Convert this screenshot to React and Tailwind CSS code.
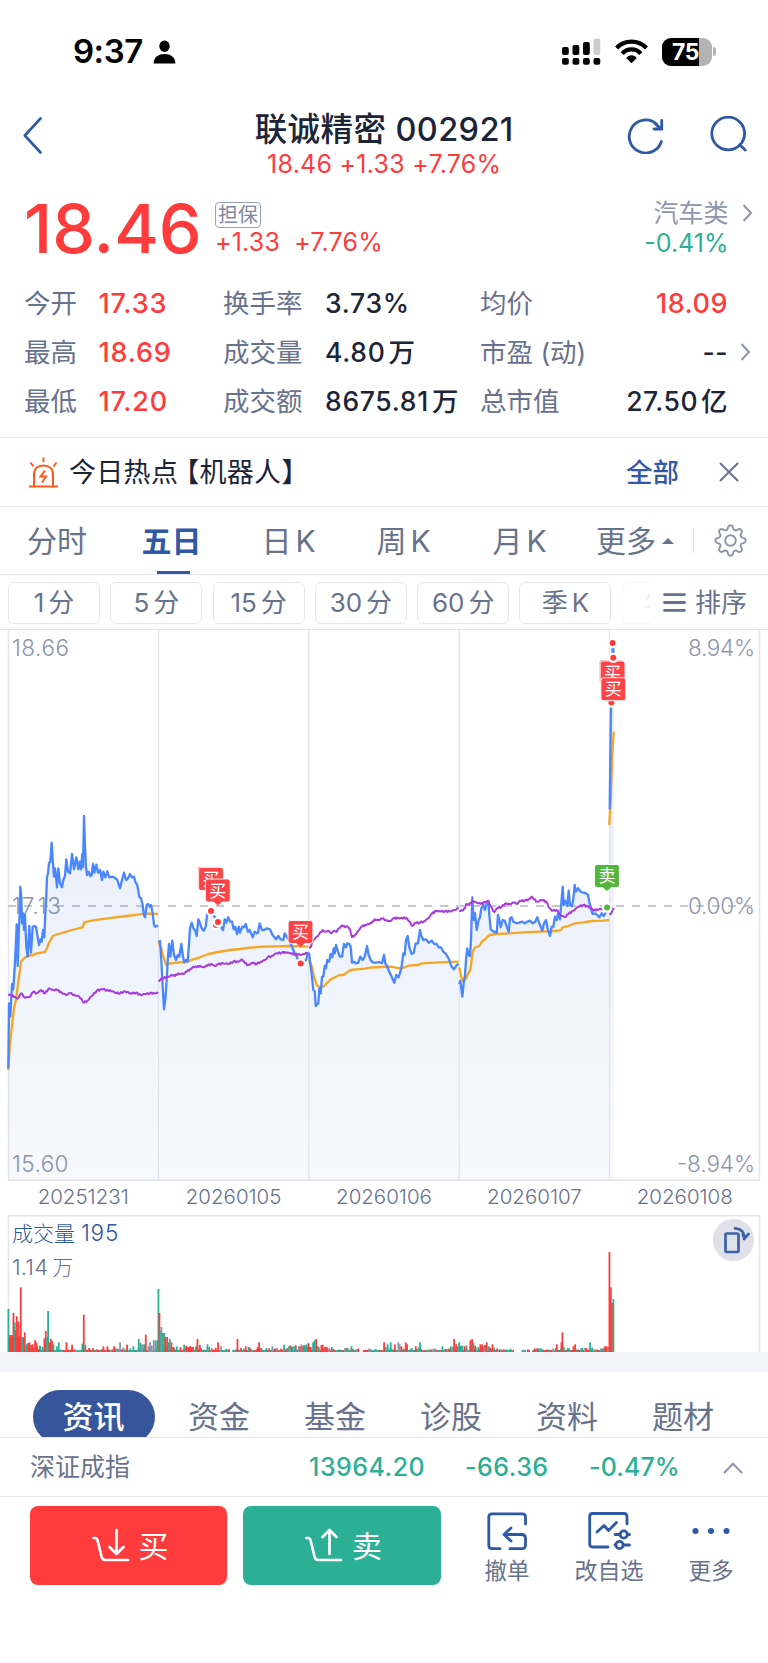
import { Fragment } from 'react'

const RED = '#ff3b3b'
const GREEN = '#52b53c'
const BLUE = '#4a86ff'
const ORANGE = '#f5a623'
const PURPLE = '#a93bdc'

// every session is sampled on a fine grid: three units to one pixel
const SESSIONS = [
  {
    x: 0,
    y: 150,
    price:
      '25,865 27,670 31,710 36,612 40,628 44,560 47,500 50,433 53,558 57,440 59,400 61,320 64,350 66,430 69,400 72,450 75,405 79,500 83,530 88,438 93,518 98,440 103,438 108,440 112,465 117,495 121,478 125,485 129,450 133,472 136,400 139,350 141,290 144,280 147,250 151,245 155,188 158,240 162,290 165,265 168,290 171,322 175,265 180,310 186,322 190,300 195,288 199,238 204,275 210,280 216,222 222,268 229,232 235,268 239,245 243,268 247,222 249,262 252,108 255,200 258,262 261,285 266,275 271,288 275,285 279,252 283,278 289,254 294,278 300,270 306,300 310,275 316,292 322,274 328,292 336,290 343,292 352,300 360,325 366,300 372,278 378,300 384,295 390,282 396,292 402,290 407,308 412,315 418,350 423,355 428,375 431,402 435,412 440,375 444,372 449,380 453,375 458,400 462,435 466,440 470,438 474,436',
    avg: '25,870 30,790 37,730 42,685 48,660 55,605 60,570 63,545 72,535 82,528 100,525 110,520 135,516 141,505 146,490 152,480 158,468 175,462 190,458 215,450 248,442 253,427 275,422 300,418 340,413 380,408 420,403 440,401 474,402',
    index:
      '25,642 35,648 45,650 53,656 64,640 72,652 88,652 100,635 110,640 122,630 135,640 148,625 160,630 172,630 185,638 198,645 210,640 222,644 238,650 252,668 262,662 275,648 290,632 305,628 312,626 318,632 330,630 345,638 360,640 375,634 392,640 408,638 422,645 435,642 450,640 474,640',
  },
  {
    x: 0,
    y: 150,
    price:
      '475,485 480,483 484,540 488,620 492,688 496,660 500,600 503,540 507,492 511,530 517,482 522,525 528,540 533,525 538,530 544,492 549,530 553,548 558,540 563,545 567,490 570,445 575,428 580,445 585,450 590,468 595,418 600,430 605,445 611,452 617,440 622,400 630,395 640,405 650,420 655,430 662,440 669,450 674,418 679,428 685,412 690,425 696,425 701,448 706,440 711,462 716,440 720,458 727,440 732,442 737,432 744,455 749,450 758,472 764,455 770,460 774,458 779,430 786,450 793,450 800,445 810,448 816,462 822,470 828,478 835,468 842,478 850,480 854,460 860,470 868,480 876,500 884,520 890,530 896,542 902,550 910,545 918,540 925,518',
    avg: '475,485 484,505 490,530 498,555 510,550 540,547 560,545 580,538 600,532 625,522 655,516 690,510 720,507 750,503 790,500 830,499 870,498 925,500',
    index:
      '475,603 490,595 505,590 515,585 525,588 535,580 550,582 560,575 570,568 580,560 590,562 600,557 610,562 622,557 635,552 645,558 655,553 670,550 685,552 700,545 715,545 726,538 735,550 745,555 757,548 770,552 782,545 795,540 803,532 815,528 830,520 845,518 855,516 870,520 885,523 900,524 912,522 925,518',
  },
  {
    x: 290,
    y: 230,
    price:
      '57,278 62,320 66,350 70,390 74,392 77,438 82,432 85,430 88,385 92,400 96,350 100,350 104,318 108,325 112,300 117,305 122,282 127,292 131,265 134,280 138,255 143,272 149,290 156,290 162,252 168,262 172,250 178,252 182,260 186,308 192,305 198,310 205,308 211,290 218,300 224,290 231,258 236,285 243,302 250,308 260,308 268,306 276,310 282,285 286,310 292,320 298,335 305,350 313,368 319,345 326,352 334,325 340,280 344,285 348,240 353,228 358,262 365,282 371,278 377,250 384,250 390,210 394,228 400,240 408,238 416,248 425,242 433,252 440,252 446,262 453,262 460,275 468,282 477,298 484,318 492,328 500,315 506,312',
    avg: '57,300 66,320 72,350 80,375 90,383 100,380 110,370 122,358 135,352 148,345 160,345 170,338 182,330 200,328 225,326 240,323 275,321 300,320 330,325 345,322 355,317 385,315 395,310 430,308 506,305',
    index:
      '57,263 62,262 70,240 80,230 88,222 98,210 106,215 114,212 122,220 132,212 140,215 147,205 156,196 166,202 174,200 180,208 186,232 195,225 205,212 215,200 225,195 235,192 244,190 254,178 266,180 276,176 288,180 300,184 312,175 325,174 350,174 358,185 367,198 376,188 390,188 402,184 415,175 425,162 438,152 450,154 465,154 480,154 495,150 506,144',
  },
  {
    x: 290,
    y: 230,
    price:
      '508,372 511,362 514,385 517,410 521,370 525,345 528,300 532,265 536,285 540,288 543,240 547,112 551,180 555,160 560,210 566,180 570,172 574,145 580,135 585,150 590,128 595,125 598,165 602,208 607,212 612,215 620,218 624,165 628,180 632,202 638,180 644,182 650,200 656,215 660,175 665,172 670,185 680,190 688,188 696,185 704,190 712,185 720,182 728,190 736,185 742,172 748,190 757,212 762,190 768,180 774,210 780,228 785,200 790,200 795,170 800,180 804,160 810,178 814,130 818,80 821,135 826,122 832,138 836,92 840,135 846,138 850,118 854,75 858,95 864,85 872,95 880,98 888,100 894,105 898,125 903,148 908,162 915,160 922,165 928,172 935,160 941,168 946,160 950,152 954,144 958,144',
    avg: '508,322 513,348 520,365 528,355 536,338 541,330 545,300 548,275 555,262 568,258 576,245 588,235 598,225 620,222 660,220 700,217 750,215 800,213 813,210 818,202 835,198 855,190 880,187 905,183 940,182 958,180',
    index:
      '508,152 518,152 525,145 528,132 538,135 547,122 560,128 572,132 585,126 595,122 602,140 613,156 620,145 635,140 648,130 660,132 672,128 680,132 690,122 705,122 716,118 725,110 732,118 742,125 755,120 768,124 775,138 785,152 800,150 812,165 825,172 835,162 850,152 865,140 880,135 895,140 905,145 912,152 922,148 935,147 950,150',
  },
  {
    x: 540,
    y: -10,
    price: '209,568 213,258 216,150 218,69 221,100',
    avg: '208,615 213,520 217,400 221,338 224,338',
    index: '208,882 213,882 218,868 223,865',
  },
]

// [x, top, colour] on the same grid, base line at 637
const VOLUME_PEAKS = [
  [25, 508, 'g'], [30, 586, 'r'], [36, 586, 'r'], [40, 520, 'r'], [44, 548, 'g'], [47, 572, 'r'], [50, 530, 'r'], [55, 545, 'r'],
  [58, 590, 'r'], [62, 443, 'r'], [66, 592, 'g'], [70, 614, 'g'], [74, 578, 'r'], [79, 614, 'g'], [84, 610, 'r'], [88, 608, 'r'],
  [93, 616, 'r'], [98, 614, 'r'], [105, 602, 'r'], [109, 608, 'r'], [120, 620, 'g'], [133, 596, 'r'], [137, 574, 'r'], [141, 592, 'g'],
  [144, 514, 'g'], [148, 608, 'r'], [152, 598, 'r'], [156, 604, 'r'], [160, 614, 'g'], [170, 620, 'g'], [176, 608, 'g'], [199, 608, 'r'],
  [216, 615, 'r'], [247, 612, 'g'], [251, 525, 'r'], [256, 615, 'g'], [310, 620, 'r'], [322, 620, 'r'], [342, 620, 'r'], [360, 608, 'n'],
  [381, 615, 'r'], [400, 620, 'g'], [416, 598, 'g'], [421, 610, 'g'], [426, 614, 'n'], [432, 614, 'g'], [437, 585, 'r'], [445, 620, 'n'],
  [450, 608, 'n'], [455, 618, 'n'], [461, 602, 'n'], [466, 602, 'n'], [471, 602, 'g'], [475, 448, 'g'], [478, 520, 'r'], [481, 574, 'g'],
  [484, 562, 'n'], [488, 580, 'g'], [492, 580, 'g'], [496, 592, 'r'], [501, 592, 'r'], [505, 608, 'g'], [509, 598, 'g'], [514, 608, 'r'],
  [520, 622, 'r'], [530, 620, 'g'], [541, 622, 'r'], [552, 615, 'g'], [560, 622, 'r'], [565, 622, 'r'], [570, 620, 'r'], [575, 622, 'r'],
  [588, 620, 'g'], [592, 598, 'r'], [622, 614, 'g'], [627, 622, 'g'], [654, 608, 'r'], [663, 620, 'n'], [712, 598, 'r'], [737, 620, 'r'],
  [746, 622, 'g'], [773, 622, 'r'], [777, 608, 'r'], [817, 620, 'n'], [852, 615, 'g'], [870, 626, 'n'], [878, 620, 'g'], [886, 620, 'g'],
  [896, 620, 'n'], [904, 614, 'n'], [912, 616, 'g'], [919, 614, 'g'], [925, 610, 'r'], [932, 622, 'r'], [939, 608, 'g'], [943, 602, 'g'],
  [948, 598, 'r'], [956, 624, 'g'], [964, 616, 'r'], [968, 615, 'r'], [980, 622, 'r'], [995, 622, 'g'], [1040, 626, 'g'], [1054, 620, 'g'],
  [1152, 608, 'r'], [1157, 622, 'g'], [1163, 614, 'g'], [1172, 608, 'g'], [1184, 614, 'r'], [1195, 608, 'n'], [1199, 614, 'n'], [1204, 620, 'r'],
  [1217, 608, 'r'], [1221, 614, 'r'], [1247, 620, 'r'], [1257, 622, 'g'], [1260, 608, 'g'], [1327, 620, 'g'], [1352, 620, 'g'], [1357, 624, 'n'],
  [1362, 598, 'r'], [1368, 614, 'r'], [1373, 620, 'g'], [1377, 608, 'g'], [1381, 618, 'g'], [1386, 618, 'g'], [1394, 620, 'r'], [1400, 624, 'n'],
  [1411, 602, 'r'], [1416, 598, 'r'], [1420, 610, 'g'], [1425, 618, 'r'], [1441, 614, 'r'], [1446, 614, 'r'], [1455, 624, 'n'], [1460, 608, 'r'],
  [1466, 620, 'g'], [1471, 624, 'r'], [1477, 614, 'r'], [1482, 624, 'g'], [1604, 626, 'r'], [1616, 626, 'g'], [1670, 614, 'r'], [1684, 608, 'r'],
  [1687, 578, 'r'], [1691, 622, 'g'], [1707, 626, 'g'], [1720, 620, 'r'], [1725, 614, 'r'], [1770, 608, 'g'], [1776, 624, 'g'], [1815, 620, 'r'],
  [1820, 620, 'r'], [1824, 622, 'n'], [1828, 337, 'r'], [1832, 443, 'r'], [1836, 490, 'r'], [1840, 478, 'g'],
]
const VOLUME_COLORS = { r: '#ff3b3b', g: '#2bb096', n: '#8d93a3' }
const VOLUME_GAPS = [[688, 698], [1078, 1088], [1542, 1564], [1576, 1580], [1590, 1598]]

const toPixels = (text, x0, y0) =>
  text.split(' ').map((pair) => {
    const [x, y] = pair.split(',').map(Number)
    return [+(x0 + x / 3).toFixed(1), +(y0 + y / 3).toFixed(1)]
  })

const toLine = (points) => points.map((p) => p.join(',')).join(' ')

// minute ticks of the index, a small step up and down between the samples
const withTicks = (points) =>
  points.flatMap(([x, y], i) => {
    const next = points[i + 1]
    if (!next) return [[x, y]]
    const ticks = Math.max(1, Math.round((next[0] - x) / 1.2))
    return Array.from({ length: ticks }, (_, t) => [
      +(x + ((next[0] - x) * t) / ticks).toFixed(1),
      +(y + ((next[1] - y) * t) / ticks + (t ? Math.sin(i * 2.1 + t * 2.6) * 0.8 : 0)).toFixed(1),
    ])
  })

const quietBars = () => {
  const bars = []
  let seed = 11
  for (let x = 27; x < 1842; x += 4) {
    seed = (seed * 1103515245 + 12345) % 2147483648
    const r = seed / 2147483648
    if (VOLUME_GAPS.some(([a, b]) => x >= a && x <= b)) continue
    const busy = x < 130 || (x > 480 && x < 600) || (x > 860 && x < 980) || (x > 1350 && x < 1480)
    const tall = x < 75 ? 44 : busy ? 15 : 9
    const kind = x < 75 ? 'r' : r < 0.45 ? 'r' : r < 0.9 ? 'g' : 'n'
    bars.push([x, 637 - Math.max(6, tall * (x < 75 ? 1 : (r * 7) % 1.4)), kind])
  }
  return bars
}

const gearPath = () =>
  Array.from({ length: 97 }, (_, i) => {
    const angle = (i / 96) * Math.PI * 2
    const r = 13.1 + 2.1 * Math.tanh(1.7 * Math.cos(8 * angle))
    return `${i ? 'L' : 'M'}${(16.5 + r * Math.cos(angle)).toFixed(2)} ${(16.5 + r * Math.sin(angle)).toFixed(2)}`
  }).join('') + 'z'

const Chevron = ({ className }) => (
  <svg className={className} viewBox="0 0 10 18" fill="none" stroke="#8f95aa" strokeWidth="2">
    <path d="M1 1l7.5 8L1 17" />
  </svg>
)

const StatusBar = () => (
  <div className="h-[102px] pt-[1px] pl-[73px] pr-[52.5px] flex items-center justify-between">
    <div className="flex items-center">
      <span className="text-[33px] font-semibold tracking-[-0.5px] text-black">9:37</span>
      <svg className="ml-[10px] w-[23px] h-[24px]" viewBox="0 0 24 24">
        <ellipse cx="12" cy="6" rx="5.4" ry="6" fill="#000" />
        <path d="M0.6 24C0.6 17.5 5.5 14 12 14s11.4 3.5 11.4 10z" fill="#000" />
      </svg>
    </div>
    <div className="flex items-center">
      <svg className="w-[39px] h-[27px]" viewBox="0 0 39 27">
        {[0, 10.5, 21, 31.5].map((x) => (
          <rect key={x} x={x} y="20" width="6.8" height="6.8" rx="2" fill="#000" />
        ))}
        <rect x="0" y="9" width="6.8" height="8" rx="2" fill="#000" />
        <rect x="10.5" y="7" width="6.8" height="10" rx="2" fill="#000" />
        <rect x="21" y="4" width="6.8" height="13" rx="2" fill="#000" />
        <rect x="31.5" y="0.5" width="6.8" height="16.5" rx="2" fill="#ccc" />
      </svg>
      <svg className="ml-[14px] w-[33px] h-[25px]" viewBox="0 0 33 25" fill="none" stroke="#000" strokeWidth="4.2">
        <path d="M1.6 9C9.5 0.4 23.5 0.4 31.4 9" />
        <path d="M7.2 14.6C12 9 21 9 25.8 14.6" />
        <path d="M11.4 19.2C13.5 15.4 19.5 15.4 21.6 19.2L16.5 24.3z" fill="#000" stroke="none" />
      </svg>
      <div className="ml-[14px] w-[50px] h-[28px] rounded-[9px] overflow-hidden bg-[#b3b3b3] relative">
        <div className="absolute left-0 top-0 w-[37px] h-full bg-black"></div>
        <div className="absolute left-[10.5px] top-0 leading-[28px] text-[23px] tracking-[-0.5px] font-bold text-white">75</div>
      </div>
      <div className="ml-[1px] w-[3px] h-[9px] rounded-r-full bg-[#b3b3b3]"></div>
    </div>
  </div>
)

const NavBar = () => (
  <div className="h-[84px] pl-[23px] pr-[20.5px] flex justify-between">
    <svg className="mt-[15px] w-[19px] h-[37px]" viewBox="0 0 19 37" fill="none" stroke="#2f58a6" strokeWidth="2.6">
      <path d="M17.5 1.5L1.8 18.5L17.5 35.5" strokeLinecap="round" strokeLinejoin="round" />
    </svg>
    <div className="ml-[99px] pt-[9px] text-center">
      <div className="text-[32.5px] leading-[37px] tracking-[0.4px] font-medium text-[#1c2438] whitespace-nowrap">联诚精密 002921</div>
      <div className="text-[25px] leading-[32px] tracking-[0.25px] text-[#ff3b3b] whitespace-nowrap">18.46 +1.33 +7.76%</div>
    </div>
    <div className="mt-[14px] flex gap-[46px]">
      <svg className="w-[37px] h-[38px]" viewBox="0 0 37 38" fill="none" stroke="#2f58a6" strokeWidth="2.8">
        <path d="M29.5 8A16.5 16.5 0 1 0 34.4 25.5" strokeLinecap="round" />
        <path d="M34.7 4.5V13H27M28 7.5L33 12" strokeLinecap="round" />
      </svg>
      <svg className="w-[37px] h-[38px]" viewBox="0 0 37 38" fill="none" stroke="#2f58a6" strokeWidth="2.8">
        <circle cx="18.2" cy="17.5" r="16.4" />
        <path d="M29.8 28.8L35.2 34" strokeLinecap="round" />
      </svg>
    </div>
  </div>
)

const PriceHeader = () => (
  <div className="h-[92px] pl-[24px] pr-[15.5px] flex">
    <div className="w-[191px] text-[68px] leading-[85px] font-medium text-[#ff3b3b]">18.46</div>
    <div className="pt-[16px]">
      <div className="w-[46px] h-[26px] rounded-[4px] border-[1.5px] border-[#9a9fb8] text-[20px] leading-[24px] text-center text-[#8087a3]">担保</div>
      <div className="text-[25px] leading-[29px] tracking-[0.2px] text-[#ff3b3b] flex gap-[14px]">
        <span>+1.33</span>
        <span>+7.76%</span>
      </div>
    </div>
    <div className="ml-auto pt-[12px] flex">
      <div className="text-right text-[25px] leading-[30px]">
        <div className="text-[#8f95aa]">汽车类</div>
        <div className="text-[#2bb096]">-0.41%</div>
      </div>
      <Chevron className="ml-[13px] mt-[6px] w-[11px] h-[18px]" />
    </div>
  </div>
)

const STATS = [
  ['今开', '17.33', '', '换手率', '3.73%', '', '均价', '18.09', ''],
  ['最高', '18.69', '', '成交量', '4.80', '万', '市盈 (动)', '--', ''],
  ['最低', '17.20', '', '成交额', '8675.81', '万', '总市值', '27.50', '亿'],
]

const Stats = () => (
  <div className="h-[160px] pt-[0.5px] pl-[24px] text-[26.5px] leading-[49px] border-b-[1.5px] border-[#e6e8ee]">
    {STATS.map((row) => (
      <div key={row[0]} className="h-[49px] flex whitespace-nowrap">
        <div className="w-[74.5px] text-[#69728c]">{row[0]}</div>
        <div className="w-[124.5px] text-[27px] tracking-[0.8px] font-medium text-[#ff3b3b]">{row[1]}</div>
        <div className="w-[102px] text-[#69728c]">{row[3]}</div>
        <div className="w-[155px] tracking-[0.7px] font-medium text-[#1c2438]">
          {row[4]}
          <span className="ml-[3px]">{row[5]}</span>
        </div>
        <div className="text-[#69728c]">{row[6]}</div>
        <div className={`ml-auto tracking-[0.5px] font-medium ${row[6] === '均价' ? 'text-[27px] text-[#ff3b3b]' : 'text-[#1c2438]'}`}>
          {row[7]}
          {row[8] && <span className="ml-[3px]">{row[8]}</span>}
        </div>
        <div className="w-[40px] pl-[12px]">{row[7] === '--' && <Chevron className="mt-[15px] w-[11px] h-[18px]" />}</div>
      </div>
    ))}
  </div>
)

const HotTopic = () => (
  <div className="h-[69px] pl-[28px] pr-[29px] flex items-center border-b-[1.5px] border-[#e6e8ee]">
    <svg className="w-[31px] h-[31px]" viewBox="0 0 31 31" fill="none" stroke="#fb5a1c" strokeWidth="2">
      <path d="M1 29.5H30M6 29V17.5C6 11.5 10 8.5 15.5 8.5S25 11.5 25 17.5V29" />
      <path d="M15.5 0.5V5M2.5 5.5L5.5 9.5M28.5 5.5L25.5 9.5" />
      <path d="M17 13.5L12.5 19.5H18L14 25.5" />
    </svg>
    <div className="ml-[10px] pt-[2px] text-[27px] tracking-[0.3px] text-[#1c2438] whitespace-nowrap">
      今日热点<span className="-ml-[6px]">【机器人】</span>
    </div>
    <div className="ml-auto pt-px text-[26.5px] font-medium text-[#2f58a6]">全部</div>
    <svg className="ml-[40px] w-[20px] h-[20px]" viewBox="0 0 20 20" stroke="#69728c" strokeWidth="2">
      <path d="M1 1L19 19M19 1L1 19" />
    </svg>
  </div>
)

const PERIODS = [
  { text: '分时', width: 'w-[114px]' },
  { text: '五日', width: 'w-[115px]', active: true },
  { text: '日', k: true, width: 'w-[119px]' },
  { text: '周', k: true, width: 'w-[111px]' },
  { text: '月', k: true, width: 'w-[121px]' },
]

const PeriodTabs = () => (
  <div className="h-[68px] flex items-stretch border-b-[1.5px] border-[#e3e5ec] text-[30px] leading-[68px] text-[#69728c]">
    {PERIODS.map((tab) => (
      <div key={tab.text} className={`${tab.width} relative text-center ${tab.active ? 'text-[#2f58a6] font-semibold' : ''}`}>
        {tab.text}
        {tab.k && <span className="ml-[4px]">K</span>}
        {tab.active && <div className="absolute left-[43px] bottom-0 w-[33px] h-[3px] bg-[#2f58a6]"></div>}
      </div>
    ))}
    <div className="ml-[16px]">更多</div>
    <div className="flex items-center">
      <svg className="ml-[6px] w-[12px] h-[6px]" viewBox="0 0 12 6" fill="#69728c">
        <path d="M6 0L12 6H0z" />
      </svg>
      <div className="ml-[19px] w-px h-[24px] bg-[#dfe1e8]"></div>
      <svg className="ml-[20px] mb-px w-[33px] h-[33px]" viewBox="0 0 33 33" fill="none" stroke="#8f95aa" strokeWidth="1.9" strokeLinejoin="round">
        <path d={gearPath()} />
        <circle cx="16.5" cy="16.5" r="5.3" />
      </svg>
    </div>
  </div>
)

const MINUTES = [['1', '分'], ['5', '分'], ['15', '分'], ['30', '分'], ['60', '分'], ['季', 'K']]

const MinuteBar = () => (
  <div className="h-[55px] pt-px pl-[8px] pr-[21px] flex items-center overflow-hidden border-b-[1.5px] border-[#e3e5ec] text-[26px] text-[#69728c]">
    <div className="flex gap-[10.3px]">
      {MINUTES.map(([a, b]) => (
        <div key={a} className="w-[92px] h-[42px] rounded-[6px] border-[1.5px] border-[#e6e8ee] flex items-center justify-center gap-[4px]">
          <span>{a}</span>
          <span>{b}</span>
        </div>
      ))}
      <div className="w-[28px] h-[42px] rounded-l-[6px] border-y border-l border-[#f4f5f8] overflow-hidden text-[#eff0f4] leading-[40px] pl-[21px]">年</div>
    </div>
    <svg className="ml-auto w-[23px] h-[19px]" viewBox="0 0 23 19" stroke="#69728c" strokeWidth="2.8" strokeLinecap="round">
      <path d="M1.5 1.6H21.5M1.5 9.5H21.5M1.5 17.4H21.5" />
    </svg>
    <div className="ml-[9px]">排序</div>
  </div>
)

const TradeMark = ({ x, y, text, color, pointer }) => (
  <g>
    <rect x={x - 12.4} y={y - 11.5} width="24.8" height="23" rx="2.5" fill={color} stroke="#fff" strokeWidth="0.9" />
    {pointer && <path d={`M${x - 5} ${y + 10.5}h10l-5 4.5z`} fill={color} />}
    {text && (
      <text x={x} y={y + 6} textAnchor="middle" fontSize="17" fill="#fff">
        {text}
      </text>
    )}
  </g>
)

const Dot = ({ x, y, color }) => <circle cx={x} cy={y} r="4.1" fill={color} stroke="#fff" strokeWidth="2.2" />

const PriceChart = () => {
  const sessions = SESSIONS.map((s) => ({
    price: toPixels(s.price, s.x, s.y),
    avg: toPixels(s.avg, s.x, s.y),
    index: withTicks(toPixels(s.index, s.x, s.y)),
  }))
  return (
    <svg className="block w-[768px] h-[551px]" viewBox="0 0 768 551">
      <defs>
        <linearGradient id="fade" gradientUnits="userSpaceOnUse" x1="0" y1="40" x2="0" y2="551">
          <stop offset="0" stopColor="#3c6fd0" stopOpacity="0.14" />
          <stop offset="1" stopColor="#3c6fd0" stopOpacity="0.04" />
        </linearGradient>
      </defs>
      <path d="M8.5 0V550M759.5 0V550M8 550.3H760" stroke="#e3e5eb" strokeWidth="1.4" fill="none" />
      <path d="M8 276H758" stroke="#c6c9d4" strokeWidth="2" strokeDasharray="8 8" />
      <g fontSize="22.5" fill="#8f95aa" fontWeight="300">
        <text x="12" y="26" textLength="57">18.66</text>
        <text x="12" y="284" textLength="49">17.13</text>
        <text x="12" y="541.5" textLength="56.5">15.60</text>
        <text x="755" y="26" textAnchor="end" textLength="67">8.94%</text>
        <text x="755" y="284" textAnchor="end" textLength="67">0.00%</text>
        <text x="755" y="541.5" textAnchor="end" textLength="78">-8.94%</text>
      </g>
      {sessions.map(({ price }, i) => (
        <polygon
          key={i}
          points={`${price[0][0]},550 ${toLine(price)} ${price[price.length - 1][0]},550`}
          fill="url(#fade)"
        />
      ))}
      <path d="M158.5 0V550M308.8 0V550M459.2 0V550M609.5 0V550" stroke="#e1e3ea" strokeWidth="1.3" />
      <g fill="none" strokeWidth="2.3" strokeLinejoin="round">
        {sessions.map(({ price, avg, index }, i) => (
          <Fragment key={i}>
            <polyline points={toLine(avg)} stroke={ORANGE} />
            <polyline points={toLine(price)} stroke={BLUE} />
            <polyline points={toLine(index)} stroke={PURPLE} strokeWidth="2" />
          </Fragment>
        ))}
      </g>

      <Dot x={216} y={295} color={RED} />
      <Dot x={211} y={281} color={RED} />
      <Dot x={218} y={292} color={RED} />
      <TradeMark x={210} y={248} color="#ff4346" />
      <TradeMark x={211} y={249} text="买" color="#ff4346" />
      <TradeMark x={217.8} y={260.5} text="买" color="#ff4346" pointer />
      <TradeMark x={300.5} y={302} text="买" color="#ff4346" pointer />
      <Dot x={300.6} y={333.5} color={RED} />

      <Dot x={612.6} y={13} color={RED} />
      <Dot x={611.4} y={72.5} color={RED} />
      <TradeMark x={611.6} y={41.5} color="#ff4346" />
      <TradeMark x={612.6} y={42.5} text="买" color="#ff4346" />
      <TradeMark x={613.3} y={59.2} text="买" color="#ff4346" />
      <Dot x={613.3} y={27.7} color={RED} />
      <TradeMark x={607} y={246} text="卖" color={GREEN} pointer />
      <Dot x={607} y={277.5} color={GREEN} />
    </svg>
  )
}

const DATES = ['20251231', '20260105', '20260106', '20260107', '20260108']

const DateAxis = () => (
  <div className="h-[34px] px-[8px] grid grid-cols-5 text-center text-[20.5px] leading-[31px] font-light text-[#69708c]">
    {DATES.map((date) => (
      <div key={date}>{date}</div>
    ))}
  </div>
)

const VolumeChart = () => (
  <div className="h-[137px] relative">
    <svg className="block w-[768px] h-[137px]" viewBox="0 0 768 137">
      <path d="M8.5 137V0.7H759.5V137" stroke="#e3e5eb" strokeWidth="1.4" fill="none" />
      {[...quietBars(), ...VOLUME_PEAKS].map(([x, top, kind], i) => (
        <rect key={i} x={x / 3 - 0.8} y={137 - (637 - top) / 3} width="1.8" height={(637 - top) / 3} fill={VOLUME_COLORS[kind]} />
      ))}
    </svg>
    <div className="absolute left-[12px] top-[3px] text-[21px] leading-[30px] text-[#2f58a6] font-light whitespace-nowrap">
      成交量 <span className="text-[22.5px] tracking-[0.8px]">195</span>
    </div>
    <div className="absolute left-[12px] top-[37px] text-[21px] leading-[30px] text-[#69728c] font-light whitespace-nowrap">
      <span className="text-[22px] tracking-[0.2px]">1.14</span><span className="ml-[4px]">万</span>
    </div>
    <div className="absolute left-[713px] top-[4px] w-[41px] h-[42px] rounded-full bg-[#dfe0e8]">
      <svg className="w-[41px] h-[42px]" viewBox="0 0 41 42" fill="none" stroke="#3d62ab" strokeWidth="2.7" strokeLinecap="round" strokeLinejoin="round">
        <rect x="12.5" y="14.5" width="13" height="18.5" rx="1.5" />
        <path d="M22 9.3C27 9.3 31 12.5 31.8 19.5M31 20L35.5 15M31.5 19.5L29.8 16" />
      </svg>
    </div>
  </div>
)

const INFO_TABS = ['资讯', '资金', '基金', '诊股', '资料', '题材']

const InfoTabs = () => (
  <div className="h-[66px] pl-[32.5px] pt-[18px] flex overflow-hidden border-b-[1.5px] border-[#e6e8ee] text-[31px] leading-[54px] text-[#69728c]">
    {INFO_TABS.map((tab, i) =>
      i === 0 ? (
        <div key={tab} className="w-[122px] h-[54px] mr-[6.5px] rounded-full bg-[#37559b] text-white font-medium text-center">{tab}</div>
      ) : (
        <div key={tab} className="w-[116px] text-center">{tab}</div>
      )
    )}
  </div>
)

const IndexRow = () => (
  <div className="h-[59px] pt-px pl-[30px] pr-[25px] flex items-center border-b-[1.5px] border-[#e6e8ee] text-[25px] tracking-[0.5px] font-medium text-[#2bb096]">
    <div className="w-[279px] text-[25px] tracking-normal font-normal text-[#69728c]">深证成指</div>
    <div className="w-[156px]">13964.20</div>
    <div className="w-[124px]">-66.36</div>
    <div className="tracking-[0.1px]">-0.47%</div>
    <svg className="ml-auto w-[20px] h-[12px]" viewBox="0 0 20 12" fill="none" stroke="#8f95aa" strokeWidth="2">
      <path d="M1 11L10 1.8L19 11" />
    </svg>
  </div>
)

const Tray = ({ up }) => (
  <svg className="w-[38px] h-[35px]" viewBox="0 0 38 35" fill="none" stroke="#fff" strokeWidth="2.7" strokeLinecap="round" strokeLinejoin="round">
    <path d="M1.5 10H3.2Q5 10 5.6 12.5L9.5 28.5Q10.3 32 13 32H36" />
    {up ? <path d="M24.5 26V2M17.5 9L24.5 2L31.5 9" /> : <path d="M24.5 2V26M17.5 19L24.5 26L31.5 19" />}
  </svg>
)

const Toolbar = () => (
  <div className="pt-[9px] pl-[30px] flex">
    <button className="w-[197px] h-[79px] pl-[3px] rounded-[8px] bg-[#ff3b3b] text-white text-[30px] flex items-center justify-center gap-[9px]">
      <Tray />
      <span className="pt-[2px]">买</span>
    </button>
    <button className="ml-[16px] w-[198px] h-[79px] pl-[3px] rounded-[8px] bg-[#2bb096] text-white text-[30px] flex items-center justify-center gap-[9px]">
      <Tray up />
      <span className="pt-[2px]">卖</span>
    </button>
    <div className="pt-[6px] flex text-[22.5px] leading-[30px] text-[#69728c]">
      <div className="ml-[16px] w-[100px] flex flex-col items-center">
        <svg className="w-[40px] h-[39px]" viewBox="0 0 40 39" fill="none" stroke="#2f58a6" strokeWidth="2.8" strokeLinecap="round" strokeLinejoin="round">
          <path d="M38.5 12V5Q38.5 1.8 35.3 1.8H5Q1.8 1.8 1.8 5V33.5Q1.8 36.7 5 36.7H13" />
          <path d="M24 16L17 22.5L24 29M18 22.5H34.5Q38.5 22.5 38.5 26.5V33Q38.5 36.7 34.8 36.7H23" />
        </svg>
        <div className="mt-[5px]">撤单</div>
      </div>
      <div className="ml-px w-[102px] flex flex-col items-center">
        <svg className="w-[43px] h-[39px]" viewBox="0 0 43 39" fill="none" stroke="#2f58a6" strokeWidth="2.8" strokeLinecap="round" strokeLinejoin="round">
          <path d="M39 12V4.5Q39 1.5 36 1.5H4.7Q1.7 1.5 1.7 4.5V32Q1.7 35 4.7 35H20" />
          <path d="M9 20L16 13.5L20.5 18.5L28.5 10.5" />
          <path d="M27 22.5H32M39.5 22.5H41.5M27 33H27.5M35.5 33H41.5" />
          <circle cx="35.7" cy="22.5" r="3.6" />
          <circle cx="31.5" cy="33" r="3.6" />
        </svg>
        <div className="mt-[5px] text-[23px]">改自选</div>
      </div>
      <div className="w-[102px] flex flex-col items-center">
        <svg className="w-[40px] h-[39px]" viewBox="0 0 40 39" fill="#2f58a6">
          <circle cx="4.5" cy="19" r="3" />
          <circle cx="20" cy="19" r="3" />
          <circle cx="35.5" cy="19" r="3" />
        </svg>
        <div className="mt-[5px]">更多</div>
      </div>
    </div>
  </div>
)

export default function App() {
  return (
    <div className="w-[768px] h-[1663px] overflow-hidden bg-white font-['Inter','Noto_Sans_CJK_SC',sans-serif]">
      <StatusBar />
      <NavBar />
      <PriceHeader />
      <Stats />
      <HotTopic />
      <PeriodTabs />
      <MinuteBar />
      <PriceChart />
      <DateAxis />
      <VolumeChart />
      <div className="h-[20px] bg-[#f3f4f7]"></div>
      <InfoTabs />
      <IndexRow />
      <Toolbar />
    </div>
  )
}
